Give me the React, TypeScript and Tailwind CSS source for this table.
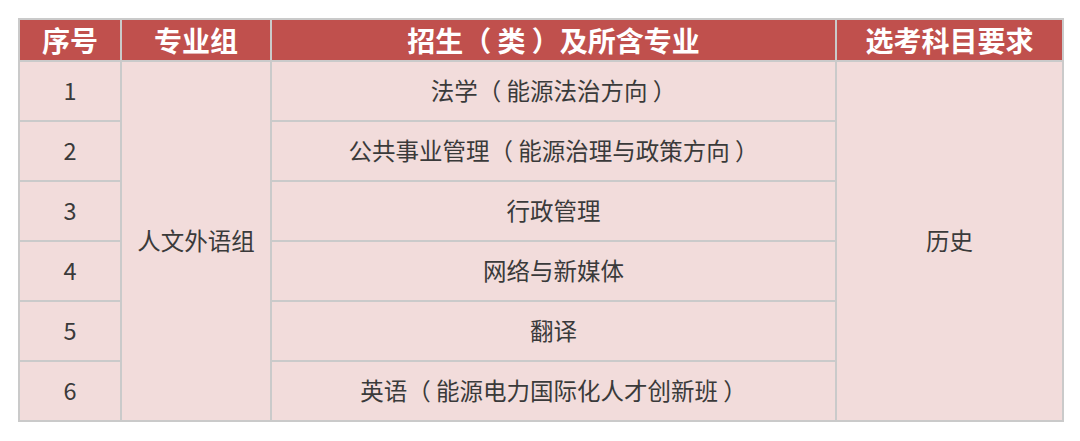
import React from 'react'

const majors = [
  '法学（能源法治方向）',
  '公共事业管理（能源治理与政策方向）',
  '行政管理',
  '网络与新媒体',
  '翻译',
  '英语（能源电力国际化人才创新班）',
]

const cell = 'border-2 border-[#cacaca] text-center align-middle'

// the source centres full-width brackets inside their em box, so pad the inner side
const Txt = ({ s }: { s: string }) => (
  <>
    {s.split(/([（）])/).map((part, i) =>
      part === '（' ? (
        <span key={i} className="mr-[0.22em]">
          {part}
        </span>
      ) : part === '）' ? (
        <span key={i} className="ml-[0.22em]">
          {part}
        </span>
      ) : (
        part
      ),
    )}
  </>
)

export default function App() {
  return (
    <div
      className="w-[1080px] h-[441px] bg-white pt-[18px] pl-[18px]"
      style={{ fontFamily: '"Noto Sans CJK SC", "Noto Sans", sans-serif' }}
    >
      <table className="border-collapse table-fixed w-[1044px] text-[#3a3a3a]">
        <colgroup>
          <col className="w-[102px]" />
          <col className="w-[150px]" />
          <col className="w-[565px]" />
          <col className="w-[227px]" />
        </colgroup>
        <thead>
          <tr className="h-[42px] bg-[#c0504d] text-white text-[28px] font-bold leading-none">
            <th className={cell}>序号</th>
            <th className={cell}>专业组</th>
            <th className={cell}>
              <Txt s="招生（类）及所含专业" />
            </th>
            <th className={cell}>选考科目要求</th>
          </tr>
        </thead>
        <tbody className="bg-[#f2dcdb] text-[23.5px] leading-none">
          {majors.map((m, i) => (
            <tr key={i} className="h-[60px]">
              <td className={cell}>{i + 1}</td>
              {i === 0 && (
                <td className={cell} rowSpan={6}>
                  人文外语组
                </td>
              )}
              <td className={cell}>
                <Txt s={m} />
              </td>
              {i === 0 && (
                <td className={cell} rowSpan={6}>
                  历史
                </td>
              )}
            </tr>
          ))}
        </tbody>
      </table>
    </div>
  )
}
